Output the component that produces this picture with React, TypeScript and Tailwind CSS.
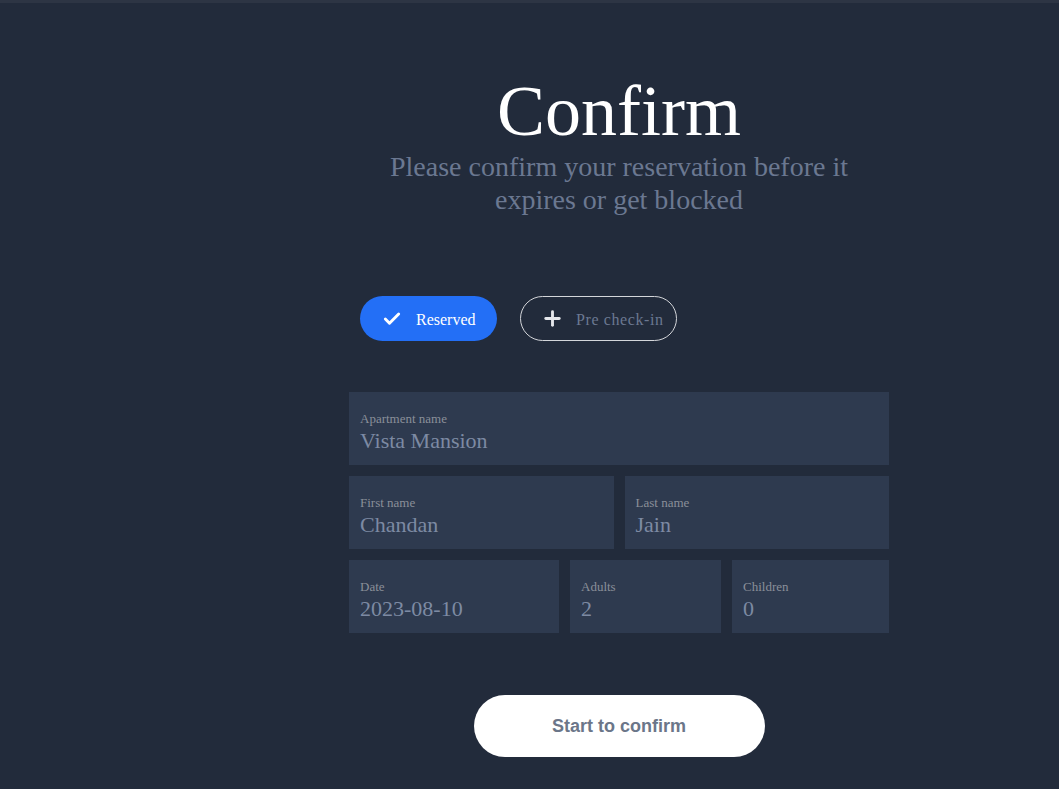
import { Check, Plus } from "lucide-react";

const serif = { fontFamily: '"Liberation Serif", "Times New Roman", serif' };

function Field({ label, value }: { label: string; value: string }) {
  return (
    <div className="bg-[#2e3a4f] h-[73px] pl-[11px] pt-[19px]">
      <div className="text-[13px] leading-4 text-[#8a8f99]">{label}</div>
      <div className="text-[22px] leading-6 text-[#7d8aa3] mt-[2px]">{value}</div>
    </div>
  );
}

export default function App() {
  return (
    <div className="min-h-[789px] bg-[#222b3b] border-t-[3px] border-[#2d3544]" style={serif}>
      <div className="flex">
        {/* empty side column */}
        <div className="w-[179px] shrink-0" />

        <main className="flex-1 flex flex-col items-center pt-[68px]">
          <h1 className="text-[72px] leading-[80px] text-white">Confirm</h1>
          <p className="text-[28px] leading-[33px] text-[#6b7891] text-center w-[470px] mt-[-1px]">
            Please confirm your reservation before it expires or get blocked
          </p>

          <div className="w-[540px] mt-[80px]">
            <div className="flex gap-[23px] pl-[11px]">
              <button className="h-[45px] w-[137px] rounded-full bg-[#236ff6] text-white text-[16px] flex items-center pl-[22px] pt-[2px] gap-[14px]">
                <Check className="w-[20px] h-[20px] -mt-[2px]" strokeWidth={3.5} />
                Reserved
              </button>
              <button className="h-[45px] w-[157px] rounded-full border border-[#d4d6da] text-[#6b7891] text-[16px] tracking-[0.6px] flex items-center pl-[20px] pt-[2px] gap-[12px]">
                <Plus className="w-[23px] h-[23px] -mt-[2px] text-[#e5e7eb]" strokeWidth={3} />
                Pre check-in
              </button>
            </div>

            <div className="mt-[51px] flex flex-col gap-[11px]">
              <Field label="Apartment name" value="Vista Mansion" />
              <div className="grid grid-cols-2 gap-[11px]">
                <Field label="First name" value="Chandan" />
                <Field label="Last name" value="Jain" />
              </div>
              <div className="grid grid-cols-[210px_151px_1fr] gap-[11px]">
                <Field label="Date" value="2023-08-10" />
                <Field label="Adults" value="2" />
                <Field label="Children" value="0" />
              </div>
            </div>
          </div>

          <button
            className="mt-[62px] h-[62px] w-[291px] rounded-full bg-white text-[18px] font-bold text-[#6b7689]"
            style={{ fontFamily: '"Liberation Sans", Arial, sans-serif' }}
          >
            Start to confirm
          </button>
        </main>
      </div>
    </div>
  );
}
